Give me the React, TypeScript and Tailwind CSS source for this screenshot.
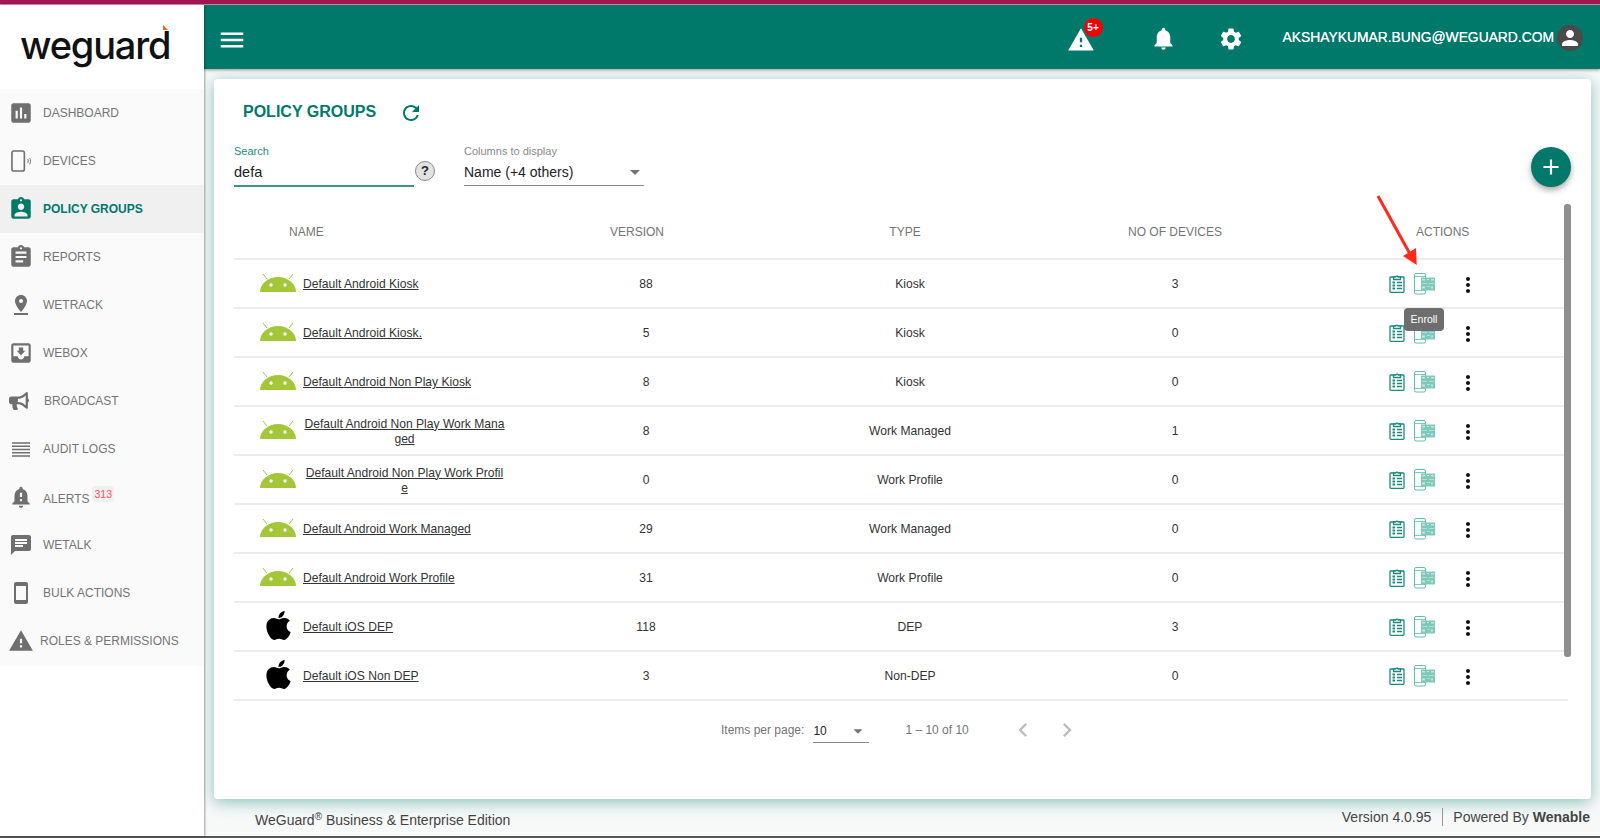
import React from "react";
import { FaApple, FaBullhorn } from "react-icons/fa";
import {
  MdAssessment, MdAssignmentInd, MdAssignment, MdPinDrop, MdMoveToInbox,
  MdNotificationImportant, MdChat, MdStayPrimaryPortrait, MdWarning, MdMenu, MdNotifications, MdSettings,
  MdPerson, MdAdd, MdRefresh, MdMoreVert, MdChevronLeft, MdChevronRight, MdArrowDropDown,
} from "react-icons/md";

const font = "font-['Liberation_Sans',Arial,sans-serif]";

function DevicesIcon({ className }: { className?: string }) {
  return (
    <svg viewBox="0 0 22 24" className={className} fill="none" stroke="currentColor">
      <rect x="1" y="1" width="13" height="21" rx="2" strokeWidth="1.7" />
      <path d="M17.5 9.500c.8 1.300.8 2.700 0 4M19.600 8.500c1.200 2 1.200 4.500 0 6.500" strokeWidth="1" />
    </svg>
  );
}

function LinesIcon() {
  return (
    <svg viewBox="0 0 18 15" className="w-[18px] h-[15px] ml-[4px]" stroke="currentColor" strokeWidth="1.500" aria-hidden>
      <path d="M0 1h18M0 4.250h18M0 7.500h18M0 10.750h18M0 14h18" />
    </svg>
  );
}

function AndroidIcon() {
  return (
    <svg viewBox="0 0 36 18" className="w-[36px] h-[18px] shrink-0 -mt-[3px]" aria-hidden>
      <path d="M0 18C0 10 8 3 18 3s18 7 18 15Z" fill="#a4c639" />
      <path d="M7 5 3 0M29 5l4-5" stroke="#a4c639" strokeWidth="1" />
      <circle cx="11" cy="11" r="1.700" fill="#fff" />
      <circle cx="25" cy="11" r="1.700" fill="#fff" />
    </svg>
  );
}

function ClipIcon() {
  return (
    <svg viewBox="0 0 16 19" className="w-[16px] h-[19px] -mt-[3px]" fill="none" stroke="#1c8b7c" strokeWidth="1.300" aria-hidden>
      <rect x="1" y="3" width="14" height="15.300" rx=".8" />
      <path d="M4.500 3h2.300a1.300 1.300 0 0 1 2.400 0h2.300v2.500h-7Z" fill="#fff" />
      <path d="M8 8.500h5M8 11.500h5M8 14.500h5" />
      <path d="M3.500 7.500h2.500v2H3.500zM3.500 10.500h2.500v2H3.500zM3.500 13.500h2.500v2H3.500z" fill="#1c8b7c" stroke="none" />
    </svg>
  );
}

function EnrollIcon() {
  return (
    <svg viewBox="0 0 21 22" className="w-[21px] h-[22px] -mt-[1px]" fill="none" aria-hidden>
      <rect x=".5" y=".5" width="11" height="20.500" rx="1.500" stroke="#62bdae" strokeWidth="1" />
      <path d="M.5 3.500h11M.5 17.500h11" stroke="#62bdae" strokeWidth=".8" />
      <rect x="7" y="4.500" width="14" height="13" fill="#7fc9bc" />
      <path d="M8 6h3v1.500H8zM13 6h2v1h-2zM17 6h3v1.500h-3zM8 10h5v.8H8zM15 10h5v.8h-5zM8 13.500h3v2H8zM13 13h3v.8h-3zM17 13.500h2v2h-2z" fill="#c3e6df" />
    </svg>
  );
}

const nav: { label: string; icon: React.ReactNode; active?: boolean; textCls?: string; badge?: string }[] = [
  { label: "DASHBOARD", icon: <MdAssessment className="w-[26px] h-[26px]" /> },
  { label: "DEVICES", icon: <DevicesIcon className="w-[21px] h-[23px] ml-[3px]" /> },
  { label: "POLICY GROUPS", icon: <MdAssignmentInd className="w-[26px] h-[26px]" />, active: true },
  { label: "REPORTS", icon: <MdAssignment className="w-[26px] h-[26px]" /> },
  { label: "WETRACK", icon: <MdPinDrop className="w-[24px] h-[24px] ml-[1px]" /> },
  { label: "WEBOX", icon: <MdMoveToInbox className="w-[26px] h-[26px]" /> },
  { label: "BROADCAST", icon: <FaBullhorn className="w-[20px] h-[20px] ml-[1px]" />, textCls: "ml-[1px]" },
  { label: "AUDIT LOGS", icon: <LinesIcon /> },
  { label: "ALERTS", icon: <MdNotificationImportant className="w-[26px] h-[26px]" />, badge: "313" },
  { label: "WETALK", icon: <MdChat className="w-[24px] h-[24px] ml-[1px]" /> },
  { label: "BULK ACTIONS", icon: <MdStayPrimaryPortrait className="w-[24px] h-[24px] ml-[1px]" /> },
  { label: "ROLES & PERMISSIONS", icon: <MdWarning className="w-[26px] h-[26px]" />, textCls: "-ml-[3px]" },
];

const rows = [
  { name: "Default Android Kiosk", version: "88", type: "Kiosk", devices: "3", os: "a" },
  { name: "Default Android Kiosk.", version: "5", type: "Kiosk", devices: "0", os: "a" },
  { name: "Default Android Non Play Kiosk", version: "8", type: "Kiosk", devices: "0", os: "a" },
  { name: "Default Android Non Play Work Managed", version: "8", type: "Work Managed", devices: "1", os: "a" },
  { name: "Default Android Non Play Work Profile", version: "0", type: "Work Profile", devices: "0", os: "a" },
  { name: "Default Android Work Managed", version: "29", type: "Work Managed", devices: "0", os: "a" },
  { name: "Default Android Work Profile", version: "31", type: "Work Profile", devices: "0", os: "a" },
  { name: "Default iOS DEP", version: "118", type: "DEP", devices: "3", os: "i" },
  { name: "Default iOS Non DEP", version: "3", type: "Non-DEP", devices: "0", os: "i" },
];

const cols = "grid grid-cols-[352px_120px_400px_132px_330px] items-center";

export default function App() {
  return (
    <div className={`${font} relative w-[1600px] h-[838px] overflow-hidden bg-white flex flex-col`}>
      <div className="h-[4px] shrink-0 bg-[#a01650]" />
      <div className="h-[1px] shrink-0 bg-[#d98fb0]" />
      <div className="h-[831px] shrink-0 flex">
        <aside className="w-[204px] shrink-0 flex flex-col bg-white z-20 shadow-[1px_0_2px_rgba(0,0,0,0.35)]">
          <div className="relative h-[84px] shrink-0 pl-[20px] pt-[15px]">
            <span className="font-['Inter',sans-serif] font-medium text-[38px] leading-[50px] tracking-[-1.200px] text-[#111]">weguard</span>
            <span className="absolute left-[163px] top-[20px] w-0 h-0 border-l-[5px] border-b-[5px] border-l-transparent border-b-[#f26522] rotate-90" />
          </div>
          <nav className="bg-[#fafafa] h-[577px] shrink-0 flex flex-col">
            {nav.map((n) => (
              <div key={n.label} className={`h-[48px] shrink-0 flex items-center pl-[8px] ${n.active ? "bg-[#f0f0f0] text-[#00796b] font-bold" : "text-[#757575]"}`}>
                <span className={`w-[35px] flex items-center shrink-0 ${n.active ? "text-[#00796b]" : "text-[#6f6f6f]"}`}>{n.icon}</span>
                <span className={`text-[12px] ${n.textCls ?? ""} ${n.badge ? "mt-[3px]" : ""}`}>{n.label}</span>
                {n.badge && <span className="ml-[3px] -mt-[7px] px-[2px] rounded-[3px] bg-[#f0f0f0] text-[#ff4d5e] text-[10.500px] leading-[16px]">{n.badge}</span>}
              </div>
            ))}
          </nav>
        </aside>

        <div className="flex-1 min-w-0 flex flex-col bg-[#f7f9f9]">
          <header className="h-[64px] shrink-0 bg-[#00796b] text-white flex items-center pt-[5px] shadow-[0_1px_3px_rgba(0,0,0,0.4)] z-10">
            <MdMenu className="w-[30px] h-[30px] ml-[13px]" />
            <div className="relative ml-auto flex -mt-[2px]">
              <MdWarning className="w-[28px] h-[28px] mt-[2px]" />
              <span className="absolute -right-[8px] -top-[6px] w-[19px] h-[19px] rounded-full bg-[#f40000] text-[10px] font-bold leading-[19px] text-center">5+</span>
            </div>
            <MdNotifications className="w-[27px] h-[27px] ml-[55px] -mt-[3px]" />
            <MdSettings className="w-[26px] h-[26px] ml-[41px] -mt-[2px]" />
            <span className="ml-[39px] text-[13.850px] font-medium whitespace-nowrap -mt-[4px] [text-shadow:0_0_0.4px_#fff]">AKSHAYKUMAR.BUNG@WEGUARD.COM</span>
            <span className="ml-[3px] mr-[17px] -mt-[4px] w-[26px] h-[26px] rounded-full bg-[#4a4a4a] flex items-center justify-center">
              <MdPerson className="w-[24px] h-[24px] text-white" />
            </span>
          </header>

          <main className="flex-1 min-h-0 pl-[10px] pt-[10px] pr-[9px] flex flex-col">
            <section className="relative h-[720px] shrink-0 bg-white rounded-[4px] shadow-[0_3px_16px_rgba(0,121,107,0.45)] pt-[23px]">
              <div className="flex items-center pl-[29px]">
                <h1 className="text-[16px] font-bold text-[#00796b] leading-[20px] -mt-[4px]">POLICY GROUPS</h1>
                <MdRefresh className="w-[24px] h-[24px] ml-[23px] text-[#00796b] -mt-[1px]" />
              </div>

              <div className="flex pl-[20px] mt-[19px] items-start">
                <div className="w-[180px]">
                  <div className="text-[11px] leading-[14px] text-[#1d8b7d]">Search</div>
                  <div className="text-[14.500px] leading-[28px] h-[29px] text-[#222] border-b-2 border-[#3c9688]">defa</div>
                </div>
                <span className="mt-[17px] ml-[1px] w-[20px] h-[20px] rounded-full bg-[#e2e2e2] border border-[#8a8a8a] text-[13px] font-bold text-[#222] leading-[18px] text-center">?</span>
                <div className="w-[180px] ml-[29px]">
                  <div className="text-[11px] leading-[14px] text-[#8a8a8a]">Columns to display</div>
                  <div className="text-[14px] leading-[24px] h-[28px] text-[#222] border-b border-[#8a8a8a] flex items-center justify-between">
                    <span>Name (+4 others)</span>
                    <MdArrowDropDown className="w-[24px] h-[24px] text-[#757575] -mr-[3px]" />
                  </div>
                </div>
              </div>

              <button className="absolute right-[20px] top-[68px] w-[40px] h-[40px] rounded-full bg-[#00796b] text-white flex items-center justify-center shadow-[0_3px_6px_rgba(0,0,0,0.35)]">
                <MdAdd className="w-[26px] h-[26px]" />
              </button>

              <div className="relative ml-[20px] mt-[20px] w-[1350px] pr-[16px]">
                <div className={`${cols} h-[53px] pb-[2px] text-[12px] text-[#757575] border-b-2 border-[#ececec]`}>
                  <span className="pl-[55px]">NAME</span>
                  <span className="text-center pr-[18px]">VERSION</span>
                  <span className="text-center pr-[2px]">TYPE</span>
                  <span className="text-center pl-[6px]">NO OF DEVICES</span>
                  <span className="pl-[178px]">ACTIONS</span>
                </div>
                {rows.map((r) => (
                  <div key={r.name} className={`${cols} h-[49px] pt-[2px] text-[12.100px] text-[#333] border-b-2 border-[#ececec]`}>
                    <div className="flex items-center pl-[26px]">
                      {r.os === "a" ? <AndroidIcon /> : <FaApple className="w-[33px] h-[33px] text-black shrink-0 mx-[2px] -mt-[4px]" />}
                      <span className={`${r.os === "a" ? "ml-[7px]" : "ml-[6px]"} max-w-[203px] text-center break-all leading-[15px] underline`}>{r.name}</span>
                    </div>
                    <span className="text-center">{r.version}</span>
                    <span className="text-center ml-[10px] pr-[2px]">{r.type}</span>
                    <span className="text-center pl-[6px]">{r.devices}</span>
                    <div className="flex items-center pl-[151px]">
                      <ClipIcon />
                      <span className="ml-[9px] flex"><EnrollIcon /></span>
                      <MdMoreVert className="w-[24px] h-[24px] text-[#111] ml-[21px]" />
                    </div>
                  </div>
                ))}
                <div className="absolute left-[1330px] -top-[3px] w-[7px] h-[453px] rounded-[3px] bg-[#8f8f8f]" />
              </div>

              <div className="flex items-center h-[58px] pl-[507px] text-[12px] text-[#757575]">
                <span>Items per page:</span>
                <span className="ml-[9px] w-[56px] h-[24px] mt-[2px] border-b border-[#8a8a8a] text-[#222] flex items-center justify-between">
                  <span>10</span>
                  <MdArrowDropDown className="w-[22px] h-[22px] text-[#757575]" />
                </span>
                <span className="ml-[36px]">1 – 10 of 10</span>
                <MdChevronLeft className="w-[28px] h-[28px] ml-[40px] text-[#bdbdbd]" />
                <MdChevronRight className="w-[28px] h-[28px] ml-[16px] text-[#bdbdbd]" />
              </div>
            </section>

            <footer className="flex items-center justify-between h-[36px] pl-[41px] pr-[1px] text-[14px] text-[#444]">
              <span className="mt-[6px]">WeGuard<sup className="text-[10px]">®</sup> Business &amp; Enterprise Edition</span>
              <span className="flex items-center">
                <span>Version 4.0.95</span>
                <span className="w-[1px] h-[18px] bg-[#999] ml-[11px] mr-[10px]" />
                <span>Powered By <b>Wenable</b></span>
              </span>
            </footer>
          </main>
        </div>
      </div>
      <div className="h-[2px] shrink-0 bg-[#555]" />

      <svg className="absolute left-[1370px] top-[190px] w-[60px] h-[80px] pointer-events-none z-30" viewBox="0 0 60 80" aria-hidden>
        <path d="M8 6 40 64" stroke="#ff2a1a" strokeWidth="3" fill="none" />
        <path d="M46.700 75 33 66 46 58Z" fill="#ff2a1a" />
      </svg>
      <div className="absolute left-[1404px] top-[308px] w-[40px] h-[23px] rounded-[4px] bg-[#6e6e6e] text-white text-[10.500px] leading-[23px] text-center z-30">Enroll</div>
    </div>
  );
}
